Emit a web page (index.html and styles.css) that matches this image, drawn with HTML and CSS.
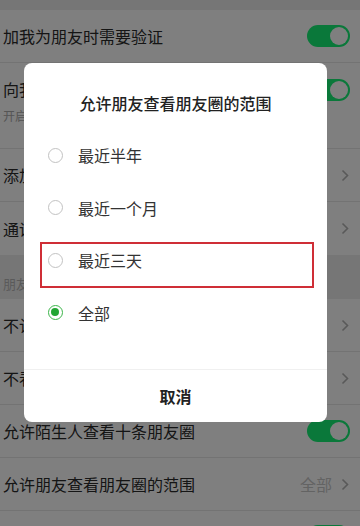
FILE: index.html
```html
<!DOCTYPE html>
<html lang="zh-CN">
<head>
<meta charset="utf-8">
<link rel="stylesheet" href="styles.css">
</head>
<body>
<div class="screen">
  <div class="list">
    <div class="strip"></div>
    <div class="row">
      <span class="label">加我为朋友时需要验证</span>
      <span class="switch"></span>
    </div>
    <div class="row row-tall">
      <div class="text">
        <div class="label">向我推荐通讯录朋友</div>
        <div class="sub">开启后，为你推荐已经开通微信的手机联系人</div>
      </div>
      <span class="switch switch-top"></span>
    </div>
    <div class="row">
      <span class="label">添加我的方式</span>
      <svg class="chev" width="8" height="13" viewBox="0 0 8 13"><polyline points="1.5,1.5 6.5,6.5 1.5,11.5" fill="none" stroke="#b2b2b2" stroke-width="1.6"/></svg>
    </div>
    <div class="row row-last">
      <span class="label">通讯录黑名单</span>
      <svg class="chev" width="8" height="13" viewBox="0 0 8 13"><polyline points="1.5,1.5 6.5,6.5 1.5,11.5" fill="none" stroke="#b2b2b2" stroke-width="1.6"/></svg>
    </div>
    <div class="section">朋友圈</div>
    <div class="row">
      <span class="label">不让他（她）看</span>
      <svg class="chev" width="8" height="13" viewBox="0 0 8 13"><polyline points="1.5,1.5 6.5,6.5 1.5,11.5" fill="none" stroke="#b2b2b2" stroke-width="1.6"/></svg>
    </div>
    <div class="row">
      <span class="label">不看他（她）</span>
      <svg class="chev" width="8" height="13" viewBox="0 0 8 13"><polyline points="1.5,1.5 6.5,6.5 1.5,11.5" fill="none" stroke="#b2b2b2" stroke-width="1.6"/></svg>
    </div>
    <div class="row">
      <span class="label">允许陌生人查看十条朋友圈</span>
      <span class="switch"></span>
    </div>
    <div class="row">
      <span class="label">允许朋友查看朋友圈的范围</span>
      <span class="value">全部</span>
      <svg class="chev" width="8" height="13" viewBox="0 0 8 13"><polyline points="1.5,1.5 6.5,6.5 1.5,11.5" fill="none" stroke="#b2b2b2" stroke-width="1.6"/></svg>
    </div>
    <div class="row row-end">
      <span class="label"></span>
      <span class="switch"></span>
    </div>
  </div>

  <div class="mask">
    <div class="dialog">
      <div class="title">允许朋友查看朋友圈的范围</div>
      <div class="options">
        <div class="option"><span class="radio"></span><span>最近半年</span></div>
        <div class="option"><span class="radio"></span><span>最近一个月</span></div>
        <div class="option"><span class="radio"></span><span>最近三天</span></div>
        <div class="option"><span class="radio radio-on"></span><span>全部</span></div>
      </div>
      <div class="cancel">取消</div>
      <div class="highlight"></div>
    </div>
  </div>
</div>
</body>
</html>
```

FILE: styles.css
```css
html, body {
  margin: 0;
  padding: 0;
}
body {
  font-family: "Noto Sans CJK SC", "Noto Sans", sans-serif;
  background: #fff;
}
.screen {
  position: relative;
  width: 360px;
  height: 526px;
  overflow: hidden;
  background: #ededed;
}
.list {
  display: flex;
  flex-direction: column;
}
.strip {
  height: 10px;
  background: #ededed;
}
.row {
  display: flex;
  align-items: center;
  height: 53px;
  box-sizing: border-box;
  padding: 0 10px 0 3px;
  background: #fff;
  border-bottom: 1px solid #e6e6e6;
  flex-shrink: 0;
}
.row-last {
  border-bottom: none;
}
.row-end {
  height: 50px;
  align-items: flex-start;
  padding-top: 14px;
}
.row-tall {
  height: 86px;
  align-items: flex-start;
  padding-top: 14px;
}
.text {
  flex: 1;
  min-width: 0;
}
.label {
  flex: 1;
  font-size: 16px;
  line-height: 24px;
  color: #2a2a2a;
  white-space: nowrap;
}
.sub {
  margin-top: 6px;
  font-size: 12px;
  line-height: 18px;
  color: #aaa;
  white-space: nowrap;
}
.section {
  height: 44px;
  box-sizing: border-box;
  padding: 20px 0 0 3px;
  font-size: 13px;
  line-height: 18px;
  color: #b4b4b4;
  background: #ededed;
}
.value {
  font-size: 16px;
  color: #c6c6c6;
  margin-right: 9px;
}
.chev {
  display: block;
  margin-right: 1px;
}
.switch {
  position: relative;
  width: 43px;
  height: 22px;
  border-radius: 11px;
  background: #14f074;
  flex-shrink: 0;
}
.switch::after {
  content: "";
  position: absolute;
  right: 2px;
  top: 2px;
  width: 18px;
  height: 18px;
  border-radius: 50%;
  background: #fff;
}
.switch-top {
  margin-top: 2px;
}
.mask {
  position: absolute;
  left: 0;
  top: 0;
  right: 0;
  bottom: 0;
  background: rgba(0, 0, 0, 0.5);
  padding: 63px 0 0 24px;
  box-sizing: border-box;
}
.dialog {
  position: relative;
  width: 303px;
  background: #fff;
  border-radius: 8px;
}
.title {
  padding-top: 28px;
  font-size: 16px;
  line-height: 24px;
  font-weight: 500;
  color: #222;
  text-align: center;
}
.options {
  margin-top: 13.75px;
  padding-bottom: 30px;
}
.option {
  display: flex;
  align-items: center;
  gap: 15px;
  height: 52.5px;
  padding-left: 24px;
  font-size: 16px;
  color: #333;
}
.radio {
  position: relative;
  width: 15px;
  height: 15px;
  box-sizing: border-box;
  border: 1.5px solid #c2c2c2;
  border-radius: 50%;
  flex-shrink: 0;
}
.radio-on {
  border-color: #3cb54a;
}
.radio-on::after {
  content: "";
  position: absolute;
  left: 2px;
  top: 2px;
  width: 8px;
  height: 8px;
  border-radius: 50%;
  background: #22a633;
}
.cancel {
  height: 53px;
  box-sizing: border-box;
  border-top: 1px solid #f0f0f0;
  display: flex;
  align-items: center;
  justify-content: center;
  font-size: 16px;
  font-weight: bold;
  color: #222;
}
.highlight {
  position: absolute;
  left: 16px;
  top: 179px;
  width: 274px;
  height: 46px;
  box-sizing: border-box;
  border: 2px solid #cf2e36;
}
```
